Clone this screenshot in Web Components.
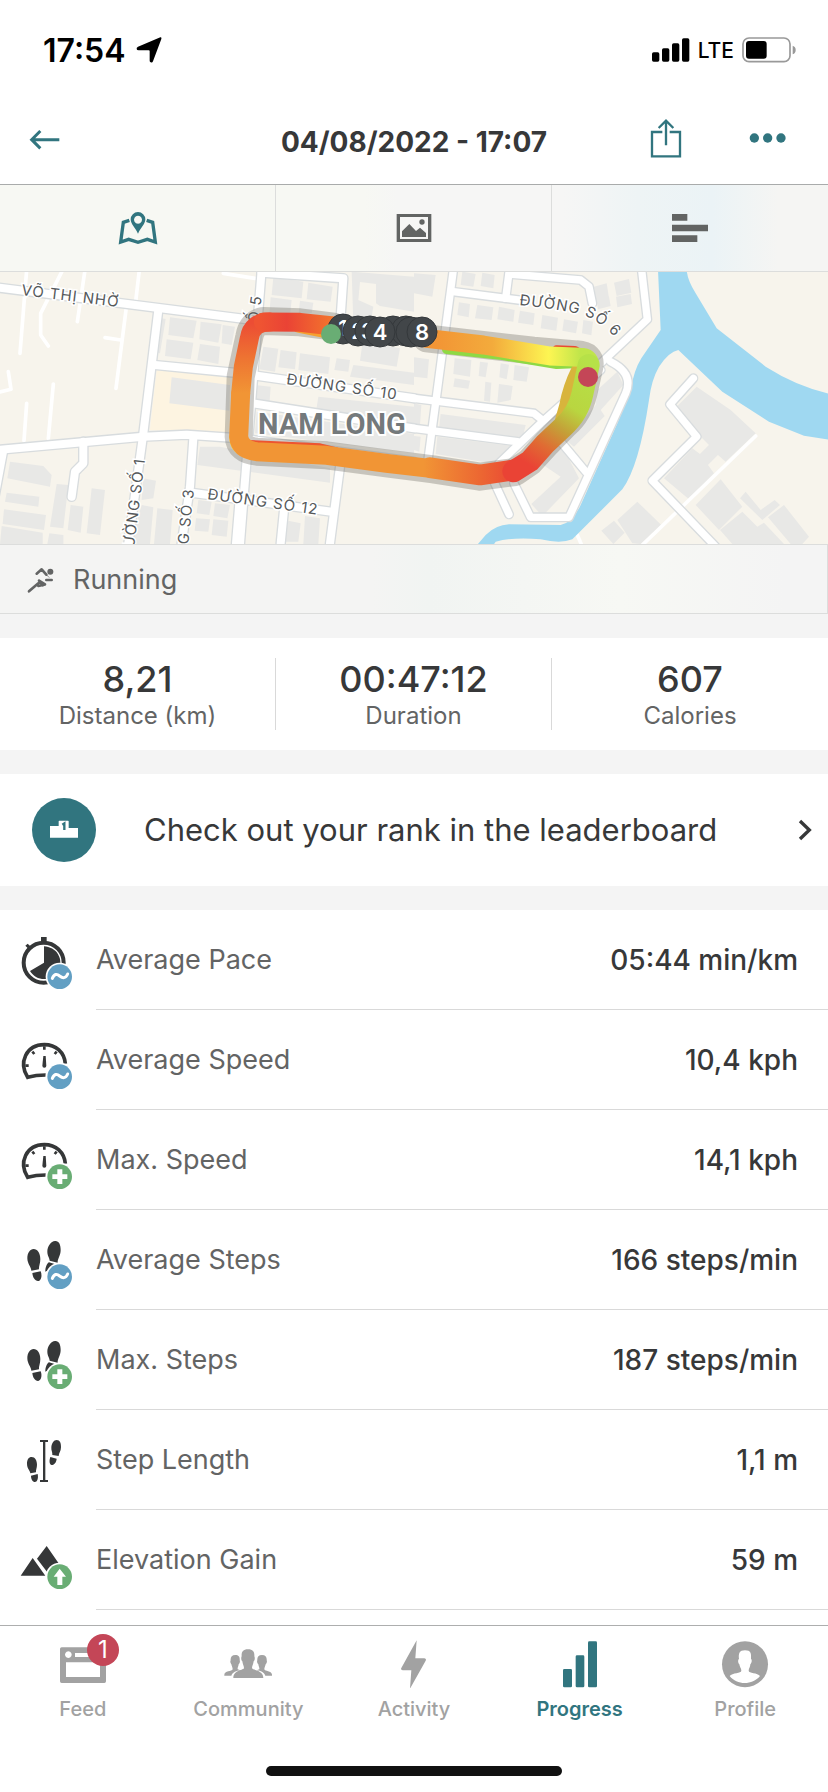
<!DOCTYPE html>
<html lang="en">
<head>
<meta charset="utf-8">
<meta name="viewport" content="width=device-width, initial-scale=1">
<title>Workout 04/08/2022</title>
<style>
  :root{
    --teal: #31757f;
    --ink: #373839;
    --muted: #636464;
    --idle: #a2a2a2;
    --line: #d9d9d9;
    --gap: #f4f4f4;
    --blue: #629fc3;
    --green: #69ad74;
    --red: #c44657;
  }
  *{ box-sizing: border-box; }
  body{
    margin: 0;
    height: 100vh;
    display: flex;
    flex-direction: column;
    background: #fff;
    color: var(--ink);
    font-family: Inter, "Liberation Sans", sans-serif;
  }
  main{ flex: 1; min-height: 0; display: flex; flex-direction: column; overflow: hidden; background: var(--gap); }
  main > *{ flex: none; }
  main > .metrics{ flex: 1 0 auto; background: #fff; margin-top: 24px; }
</style>
</head>
<body>
  <status-bar>17:54</status-bar>
  <workout-header>04/08/2022 - 17:07</workout-header>
  <main>
    <view-tabs></view-tabs>
    <route-map></route-map>
    <activity-type>Running</activity-type>
    <stat-group>
      <stat-item label="Distance (km)">8,21</stat-item>
      <stat-item label="Duration">00:47:12</stat-item>
      <stat-item label="Calories">607</stat-item>
    </stat-group>
    <rank-link>Check out your rank in the leaderboard</rank-link>
    <div class="metrics">
      <metric-row icon="pace" badge="average" label="Average Pace">05:44 min/km</metric-row>
      <metric-row icon="gauge" badge="average" label="Average Speed">10,4 kph</metric-row>
      <metric-row icon="gauge" badge="max" label="Max. Speed">14,1 kph</metric-row>
      <metric-row icon="steps" badge="average" label="Average Steps">166 steps/min</metric-row>
      <metric-row icon="steps" badge="max" label="Max. Steps">187 steps/min</metric-row>
      <metric-row icon="length" label="Step Length">1,1 m</metric-row>
      <metric-row icon="hills" badge="gain" label="Elevation Gain">59 m</metric-row>
    </div>
  </main>
  <tab-bar>
    <tab-item icon="feed" count="1">Feed</tab-item>
    <tab-item icon="community">Community</tab-item>
    <tab-item icon="activity">Activity</tab-item>
    <tab-item icon="progress" active>Progress</tab-item>
    <tab-item icon="profile">Profile</tab-item>
  </tab-bar>

<script>
const RESET = `
  *{ box-sizing: border-box; }
  svg{ display: block; flex: none; }
  button{ border: 0; padding: 0; margin: 0; background: none; color: inherit; font: inherit; }
  a{ color: inherit; text-decoration: none; }
`;

function define(name, render){
  customElements.define(name, class extends HTMLElement{
    constructor(){
      super();
      this.attachShadow({mode:"open"});
    }
    connectedCallback(){
      this.shadowRoot.innerHTML = `<style>${RESET}</style>` + render(this);
    }
  });
}

/* ---------- top of the screen ---------- */
define("status-bar", () => `
  <style>
    :host{ display: flex; align-items: center; justify-content: space-between; height: 95px; padding: 5px 32px 0 43px; color: #000; }
    div{ display: flex; align-items: center; }
    .time{ gap: 10px; font-size: 32px; font-weight: 600; }
    .net{ gap: 8px; font-size: 21px; font-weight: 500; }
  </style>
  <div class="time"><slot></slot>
    <svg width="26" height="26" viewBox="0 0 78 78"><path d="M73 1Q78 0 76 6L51 73Q49 78 44 76Q41 75 41 71V42Q41 40 38 40H8Q2 40 2 36Q1 32 6 29Z"/></svg>
  </div>
  <div class="net">
    <svg width="38" height="24" viewBox="0 0 114 72"><rect y="43" width="22" height="28" rx="5"/><rect x="30" y="31" width="22" height="40" rx="5"/><rect x="60" y="16" width="22" height="55" rx="5"/><rect x="90" y="1" width="22" height="70" rx="5"/></svg>
    LTE
    <svg width="54" height="26" viewBox="0 0 162 78"><rect x="3" y="3" width="141" height="71" rx="18" fill="none" stroke="#999" stroke-width="5"/><rect x="12" y="12" width="62" height="53" rx="9"/><path d="M152 26q9 3 9 13t-9 13z" fill="#999"/></svg>
  </div>`);

define("workout-header", () => `
  <style>
    :host{ display: grid; grid-template-columns: 1fr auto 1fr; align-items: center; height: 90px; padding: 0 29px; border-bottom: 1px solid #a9abab; color: var(--teal); }
    button{ justify-self: start; }
    h1{ margin: 0; padding-top: 4px; font-size: 28px; line-height: 36px; font-weight: 700; color: var(--ink); }
    .actions{ display: flex; align-items: center; justify-content: flex-end; gap: 67px; padding: 0 12px 4px 0; }
  </style>
  <button type="button" aria-label="Back">
    <svg width="32" height="24" viewBox="0 0 96 72" fill="none" stroke="currentColor" stroke-width="9"><path d="M6 35H91M34 9L8 35L34 61"/></svg>
  </button>
  <h1><slot></slot></h1>
  <div class="actions">
    <button type="button" aria-label="Share">
      <svg width="32" height="40" viewBox="0 0 96 120" fill="none" stroke="currentColor" stroke-width="7"><path d="M37 42H6V115H90V42H59M48 82V9M26 30L48 8L70 30"/></svg>
    </button>
    <button type="button" aria-label="More">
      <svg width="38" height="12" viewBox="0 0 114 36" fill="currentColor"><circle cx="16" cy="18" r="14"/><circle cx="56" cy="18" r="14"/><circle cx="96" cy="18" r="14"/></svg>
    </button>
  </div>`);

define("view-tabs", () => `
  <style>
    :host{ display: grid; grid-template-columns: repeat(3, 1fr); height: 87px; border-bottom: 1px solid #dcdddc; color: #626463;
      background: linear-gradient(90deg, #f7f8f3 0 44%, #f6f6f5 48% 68%, #eef4f5 77%, #ebf3f6 86%, #f5f5f3 94%); }
    button{ display: flex; align-items: center; justify-content: center; border-right: 1px solid #dcdddc; }
    button:last-child{ border: 0; }
    .on{ color: var(--teal); }
  </style>
  <button type="button" class="on" aria-label="Map">
    <svg width="40" height="34" viewBox="354 630 120 102" fill="currentColor"><path fill-rule="evenodd" d="M414 633a22 22 0 0 1 22 22c0 14-13 24-22 43c-9-19-22-29-22-43a22 22 0 0 1 22-22m0 11a12 12 0 1 0 .1 0z"/><path d="M388 658L370 664L362 723L386 715L414 724L442 715L466 723L458 664L440 658" fill="none" stroke="currentColor" stroke-width="10"/></svg>
  </button>
  <button type="button" aria-label="Photos">
    <svg width="36" height="30" viewBox="0 0 108 90" fill="currentColor"><path fill-rule="evenodd" d="M2 3H106V87H2ZM12 12V78H96V12Z"/><path d="M18 72V55L40 33L60 54L72 44L90 60V72Z"/><circle cx="78" cy="27" r="8"/></svg>
  </button>
  <button type="button" aria-label="Splits">
    <svg width="36" height="28" viewBox="0 0 108 84" fill="currentColor"><path d="M0 0H46V20H0ZM0 32H108V52H0ZM0 64H76V84H0Z"/></svg>
  </button>`);

/* ---------- map ---------- */
// tile geometry is in thirds of a pixel, east holds the half right of x = 1242
const road = (d, w = 24) => `<path d="${d}" stroke="#d8dcde" stroke-width="${w + 8}"/>`;
const west = ["M-10 52L775 152", "M785 0L720 820V820", "M475 120L430 490L385 820", "M465 285L720 310L1242 385", "M-10 540L430 500L560 494L720 505L1242 575", "M10 540L-20 700", "M250 515V580L225 605L215 680", "M580 505L570 650L545 820", "M575 668L1000 726", "M1020 590L990 820", "M718 700L708 820", "M852 720L842 820", "M785 8L1030 25L1020 170", "M760 400L1242 475"];
const east = ["M118 0L42 570", "M118 65L330 92", "M286 0L275 85", "M286 12L500 30L525 50L535 100", "M683 0L700 148L560 280", "M0 385L360 430L385 450", "M0 475L310 515", "M590 275Q660 310 635 370L465 742H350L300 640", "M560 300L380 460L255 580", "M240 635L285 733", "M440 515L515 605", "M838 325L768 403L848 500L715 632L905 830"];

const buildings = `
  <path d="M820 22L910 35L905 85L815 75ZM925 38L998 50L992 95L920 88ZM812 82L875 90L870 135H808ZM900 92L940 98L935 130H896ZM1055 5L1242 20V125L1140 108L1128 100V42L1080 36L1075 90L1120 110L1110 170L1060 160Z"/>
  <path d="M510 142L590 152L580 205L505 195ZM602 155L665 163L655 218L598 208ZM500 208L580 218L572 268L495 258ZM600 222L660 230L655 282L592 270ZM668 165L705 170L695 225L665 220ZM485 145L497 147L480 250L472 248Z"/>
  <path d="M515 322L690 345L688 422L508 400ZM600 530L660 530L990 595V638L592 585ZM30 575L130 588L155 615L150 650L22 625ZM20 668L118 680L115 710L15 695ZM12 718L138 735L132 780L8 762ZM5 768L128 788V822H0ZM170 642L205 645L190 775L150 770ZM212 705L250 710L242 788L203 780ZM275 655L315 660L300 795L260 790ZM148 790L190 795V822H142ZM430 625L468 632L460 685L425 690ZM425 705L460 712L450 822H390ZM472 715L518 720L510 822H462Z"/>
  <path d="M595 690L635 695L628 735L590 730ZM645 700L690 705L682 745L640 738ZM588 745L630 748L625 785L584 782ZM640 748L685 752L680 800L635 795ZM865 752L902 760L895 815H852ZM915 738L960 745L955 822H910Z"/>
  <path d="M790 230L835 236L825 305L778 298ZM842 240L890 247L885 298L835 292ZM900 250L990 262L985 312L895 300ZM1010 265L1050 270L1045 305L1003 300ZM1088 215L1200 235L1190 290L1080 272ZM1060 285L1242 308V345L1050 320ZM765 345L812 350L808 405L760 400ZM955 380L1242 410V460L948 425ZM770 425L1242 492V550L765 490Z"/>`;
const buildingsEast = `
  <path d="M0 10L65 15L55 80L0 70ZM145 5L185 12L178 50L140 45ZM205 8L242 15L238 55L200 48ZM135 97L168 102L164 142L130 135ZM190 105L238 112L233 150L183 145ZM255 110L302 120L298 155L250 148ZM318 122L362 130L358 165L312 158ZM385 135L432 143L427 182L380 175ZM450 148L492 155L486 190L445 182ZM508 150L537 155L532 196L504 190ZM540 50L578 40L585 85L548 100ZM600 38L645 27L652 68L608 78ZM606 80L650 72L654 102L610 112ZM548 90L585 80L590 108L552 118Z"/>
  <path d="M0 262L45 268L40 325L0 320ZM122 265L172 270L168 320L118 312ZM198 275L222 278L215 322L194 318ZM260 280L285 284L278 328L256 322ZM302 285L345 292L338 335L298 330ZM122 325L168 332L163 356L118 350ZM214 335L232 338L228 395L210 392ZM255 342L296 348L290 390L250 398ZM80 432L335 465L325 508L75 475ZM70 500L310 530L270 555L245 582L65 552ZM0 400L22 405L18 465L0 460ZM0 498L20 500L16 545L0 540Z"/>
  <path d="M610 305L628 345L560 420L572 438L480 530L455 510L545 405L550 360ZM385 560L440 520L495 625L385 738L352 702L440 620L380 580Z"/>
  <path d="M848 350L950 420L1025 490L935 575L912 555L882 585L900 610L825 688L750 625L835 535L858 552L885 525L850 490L790 408ZM920 628L985 710L915 780L845 705ZM985 725L1030 770L1050 758L1110 822H955L918 780ZM1110 705L1185 800L1165 822H1130L1062 742ZM995 665L1040 720L1082 690L1098 705L1045 750L978 685ZM670 695L742 765L680 822L655 820L610 750ZM600 752L632 788L598 822L562 782Z"/>`;

define("route-map", () => `
  <style>
    :host{ display: block; height: 272px; overflow: hidden; background: #f7f4ec; }
    svg{ width: 100%; height: 100%; }
    text{ font-family: Inter, "Noto Sans", sans-serif; }
    .street{ font-size: 15px; letter-spacing: 1px; fill: #55595b; stroke: #fff; stroke-width: 3px; paint-order: stroke; }
    .area{ font-family: Roboto, sans-serif; font-size: 29px; font-weight: 700; fill: #74797b; stroke: #fff; stroke-width: 4px; paint-order: stroke; }
    .km{ font-size: 22px; font-weight: 600; fill: #fff; text-anchor: middle; }
  </style>
  <svg viewBox="0 0 828 272" preserveAspectRatio="xMidYMid slice" role="img" aria-label="Route map">
    <defs>
      <linearGradient id="north" gradientUnits="userSpaceOnUse" x1="1310" y1="0" x2="1790" y2="0"><stop offset="0" stop-color="#f29535"/><stop offset=".35" stop-color="#f3ab3c"/><stop offset=".7" stop-color="#fdf552"/><stop offset=".9" stop-color="#bfe54a"/></linearGradient>
      <linearGradient id="bend" gradientUnits="userSpaceOnUse" x1="1775" y1="280" x2="1580" y2="580"><stop offset="0" stop-color="#b6e148"/><stop offset=".4" stop-color="#b9d640"/><stop offset=".6" stop-color="#c4a138"/><stop offset=".8" stop-color="#e06b33"/><stop offset="1" stop-color="#ea4335"/></linearGradient>
      <linearGradient id="south" gradientUnits="userSpaceOnUse" x1="1560" y1="0" x2="1270" y2="0"><stop offset="0" stop-color="#ea4335"/><stop offset=".4" stop-color="#ec6632"/><stop offset="1" stop-color="#f19535"/></linearGradient>
      <linearGradient id="side" gradientUnits="userSpaceOnUse" x1="0" y1="370" x2="0" y2="160"><stop offset="0" stop-color="#f19535"/><stop offset=".5" stop-color="#ee7432"/><stop offset="1" stop-color="#ec4d34"/></linearGradient>
      <linearGradient id="start" gradientUnits="userSpaceOnUse" x1="780" y1="0" x2="1010" y2="0"><stop offset="0" stop-color="#ef5432"/><stop offset=".35" stop-color="#ea4335"/><stop offset="1" stop-color="#f47a2c"/></linearGradient>
      <path id="curve" d="M519 33Q560 37 582 43Q604 49 626 79"/>
    </defs>
    <g transform="scale(.333333) translate(0 -6)" stroke-linejoin="round" stroke-linecap="round">
      <path d="M470 300L690 322V490L450 480Z" fill="#fdf4e1"/>
      <g fill="#e8e8e6">${buildings}<g transform="translate(1242 0)">${buildingsEast}</g></g>
      <g fill="none" stroke="#fff" stroke-width="11">
        <path d="M80 0L60 250M188 0L122 130V195L145 228M255 0L232 155M418 0L407 95M378 120L348 355M315 203L362 210M25 305L33 358L0 366M80 400L72 512M160 342L145 505M670 10L765 25"/>
        <path transform="translate(1242 0)" d="M1025 498L680 830M490 795L505 830"/>
      </g>
      <g transform="translate(1242 0)" fill="#9fd8f1">
        <path d="M732 0H818Q820 30 845 70L908 175L1055 290Q1150 350 1250 372V510L1170 497L1065 455L925 365L793 240Q765 245 735 290Q712 330 705 390Q675 590 625 658L475 808Q440 822 380 808Q300 800 245 815L235 830H185L215 795Q245 765 285 763L440 765Q475 758 500 705L610 460L650 360Q660 300 682 265L740 180Z"/>
      </g>
      <g fill="none">
        ${west.map(d => road(d)).join("")}
        <g transform="translate(1242 0)">${east.map(d => road(d, 22)).join("")}</g>
        <g stroke="#fff" stroke-width="24">${west.map(d => `<path d="${d}"/>`).join("")}
          <g transform="translate(1242 0)" stroke-width="22">${east.map(d => `<path d="${d}"/>`).join("")}</g></g>
      </g>
    </g>
    <g class="street">
      <text transform="translate(262 24) rotate(-82)" text-anchor="end">ĐƯỜNG SỐ 5</text>
      <text transform="translate(21 23) rotate(7)">VÕ THỊ NHỜ</text>
      <text transform="translate(286 112) rotate(8)">ĐƯỜNG SỐ 10</text>
      <text transform="translate(207 227) rotate(8)">ĐƯỜNG SỐ 12</text>
      <text transform="translate(145 187) rotate(-83)" text-anchor="end">ĐƯỜNG SỐ 1</text>
      <text transform="translate(194 217) rotate(-84)" text-anchor="end">ĐƯỜNG SỐ 3</text>
      <text><textPath href="#curve">ĐƯỜNG SỐ 6</textPath></text>
    </g>
    <text class="area" x="258" y="162">NAM LONG</text>
    <g transform="scale(.333333) translate(0 -6)" fill="none" stroke-linejoin="round" stroke-linecap="round">
      <path d="M1000 170L900 157L790 153Q755 160 748 200L722 320L716 500Q718 540 770 545L980 556L1160 580L1300 598L1440 620L1545 606L1590 575L1640 520L1697 462Q1735 430 1750 370L1768 290Q1775 255 1730 253L1600 242L1280 205" stroke="#5a554b" stroke-opacity=".3" stroke-width="84"/>
      <path d="M1670 238L1725 240L1755 258" stroke="#e94b32" stroke-width="24"/>
      <path d="M1340 238L1500 255L1670 283L1740 280" stroke="#8fd944" stroke-width="28"/>
      <path d="M1730 300Q1705 350 1695 405L1682 450" stroke="#d8b43c" stroke-width="34"/>
      <path d="M703 500Q702 545 765 556L850 562" stroke="#fddc42" stroke-width="30"/>
      <path d="M748 520L960 530L1010 542" stroke="#ed5430" stroke-width="20"/>
      <path d="M1000 182L900 162" stroke="#f6a02f" stroke-width="54"/>
      <g stroke-width="57">
        <path d="M722 370L716 500Q720 538 770 545L980 556L1160 580L1290 595" stroke="#f19535"/>
        <path d="M1290 593L1440 615L1540 600" stroke="url(#south)" stroke-width="62"/>
        <path d="M1280 205L1450 225L1650 258L1740 262Q1770 262 1768 285" stroke="url(#north)"/>
        <path d="M1766 285L1747 372Q1735 430 1690 470L1635 522L1590 573L1540 604" stroke="url(#bend)" stroke-width="66"/>
        <path d="M810 156Q755 156 748 205L730 290L722 370" stroke="url(#side)"/>
        <path d="M790 156L900 157L1000 168" stroke="url(#start)"/>
      </g>
    </g>
    <g fill="#424649" stroke="#34383b">
      <circle cx="343" cy="57" r="15"/><text class="km" stroke="none" x="343" y="64">1</text>
      <circle cx="358" cy="59" r="15"/><text class="km" stroke="none" x="358" y="67">2</text>
      <circle cx="370" cy="59" r="15"/><text class="km" stroke="none" x="368" y="67">3</text>
      <circle cx="393" cy="59" r="15"/><circle cx="406" cy="59" r="15"/><circle cx="411" cy="60" r="15"/>
      <circle cx="380" cy="60" r="15"/><text class="km" stroke="none" x="380" y="68">4</text>
      <circle cx="422" cy="60" r="15"/><text class="km" stroke="none" x="422" y="68">8</text>
    </g>
    <circle cx="331" cy="62" r="10" fill="#69ad74"/>
    <circle cx="588" cy="105" r="10" fill="#c44657"/>
  </svg>`);

define("activity-type", () => `
  <style>
    :host{ display: flex; align-items: center; gap: 18px; height: 70px; padding: 2px 27px 0; font-size: 27px; line-height: 36px; color: var(--muted);
      border: solid #dcdddc; border-width: 1px 1px 1px 0; background: linear-gradient(90deg, #f4f4f3 45%, #f1f4f2 52%, #f7f8f4 75%, #f4f4f4 95%); }
  </style>
  <svg width="28" height="28" viewBox="0 0 84 84" fill="none" stroke="currentColor" stroke-width="8" stroke-linecap="round" stroke-linejoin="round"><path d="M6 76L34 52M29 23L44 10L58 26M36 44L54 55L34 60M36 44L48 58M58 42H74"/><path d="M58 26L66 34" stroke-width="2"/><circle cx="70" cy="17" r="9" fill="currentColor" stroke="none"/></svg>
  <slot></slot>`);

/* ---------- summary ---------- */
define("stat-group", () => `
  <style>
    :host{ display: grid; grid-template-columns: repeat(3, 1fr); margin-top: 24px; padding: 20px 0; background: #fff; }
    ::slotted(:not(:last-child)){ border-right: 1px solid var(--line); }
  </style>
  <slot></slot>`);

define("stat-item", el => `
  <style>
    :host{ display: flex; flex-direction: column; align-items: center; height: 72px; }
    strong{ font-size: 36px; line-height: 42px; font-weight: 500; }
    span{ font-size: 24px; line-height: 32px; color: var(--muted); }
  </style>
  <strong><slot></slot></strong><span>${el.getAttribute("label")}</span>`);

define("rank-link", () => `
  <style>
    :host{ display: block; margin-top: 24px; background: #fff; }
    a{ display: flex; align-items: center; height: 112px; padding: 0 16px 0 32px; font-size: 31px; line-height: 40px; }
    .disc{ display: grid; place-items: center; width: 64px; height: 64px; margin-right: 48px; border-radius: 50%; background: var(--teal); }
    .chevron{ margin-left: auto; }
  </style>
  <a href="#leaderboard">
    <span class="disc"><svg width="28" height="24" viewBox="0 0 84 72"><path d="M0 59V24H26V10Q26 8 28 8H54Q56 8 56 10V30H84V59Z" fill="#fff"/><path d="M37 20L43 16V36" fill="none" stroke="#31757f" stroke-width="7"/></svg></span>
    <slot></slot>
    <svg class="chevron" width="14" height="22" viewBox="0 0 42 66" fill="none" stroke="currentColor" stroke-width="10"><path d="M6 6L34 33L6 60"/></svg>
  </a>`);

/* ---------- metric list ---------- */
const METRIC_ICONS = {
  pace: `<circle cx="131" cy="155" r="60" fill="none" stroke="currentColor" stroke-width="12"/><path d="M132 155V106A49 49 0 1 1 90 180Z"/><path d="M123 78H140V94H123ZM76 104L83 98L96 110L89 117Z"/>`,
  gauge: `<path d="M137 192Q108 192 83 199C55 155 78 101 133 101C168 101 193 124 196 158" fill="none" stroke="currentColor" stroke-width="11"/><path d="M133 106V116M97 122L103 129M170 122L164 129M76 164H86" fill="none" stroke="currentColor" stroke-width="8"/><path d="M130 135H137L139 164A6 6 0 1 1 127 164Z"/>`,
  steps: `<path d="M101 114C112 114 121 126 121 144C121 158 116 166 117 175L94 179C93 167 82 158 82 142C82 126 90 114 101 114ZM97 186L122 181C128 196 122 210 114 210C105 210 98 199 97 186ZM165 90C177 89 182 101 182 117C182 134 172 144 173 155L149 149C149 140 142 135 142 122C142 106 153 91 165 90ZM147 154L164 159L150 175L136 182C136 170 140 158 147 154Z"/>`,
  length: `<path d="M95 138C105 138 111 148 111 161C111 171 107 178 108 184L91 187C90 177 81 173 81 158C81 146 86 138 95 138ZM93 194L113 189C116 203 111 213 105 213C98 213 93 204 93 194ZM170 87C180 87 183 96 183 109C183 121 176 127 176 135L157 132C158 124 153 119 154 109C155 97 161 87 170 87ZM151 138L170 143C169 156 161 162 155 162C148 161 147 149 151 138ZM120 87H144V93H136V207H144V213H120V207H129V93H120Z"/>`,
  hills: `<path d="M62 194L98 141L136 194ZM140 105L178 160L142 184L111 143Z"/>`
};
const BADGES = {
  average: `<circle cx="179" cy="197" r="37" fill="var(--blue)"/><path d="M157 202C163 188 171 188 179 195C188 202 197 203 203 189" fill="none" stroke="#fff" stroke-width="9" stroke-linecap="round"/>`,
  max: `<circle cx="179" cy="197" r="37" fill="var(--green)"/><path d="M172 175H187V190H202V204H187V219H172V204H157V190H172Z" fill="#fff"/>`,
  gain: `<circle cx="179" cy="197" r="37" fill="var(--green)"/><path d="M179 173L198 197H187V222H172V197H161Z" fill="#fff"/>`
};

define("metric-row", el => {
  const badge = BADGES[el.getAttribute("badge")];
  return `
  <style>
    :host{ display: flex; align-items: center; height: 100px; padding-left: 20px; font-size: 28px; line-height: 36px; }
    svg{ margin-right: 20px; color: #353738; overflow: visible; }
    div{ flex: 1; display: flex; align-items: center; justify-content: space-between; height: 100%; padding-right: 30px; border-bottom: 1px solid var(--line); }
    span{ font-size: 27px; color: var(--muted); }
    strong{ font-weight: 500; }
  </style>
  <svg width="56" height="56" viewBox="60 63 168 168" fill="currentColor">${METRIC_ICONS[el.getAttribute("icon")]}${badge ? `<circle cx="179" cy="197" r="42" fill="#fff"/>${badge}` : ""}</svg>
  <div><span>${el.getAttribute("label")}</span><strong><slot></slot></strong></div>`;
});

/* ---------- bottom navigation ---------- */
const TAB_ICONS = {
  feed: `<svg viewBox="174 89 144 144"><path fill-rule="evenodd" d="M182 111H310Q315 111 315 116V213Q315 218 310 218H182Q177 218 177 213V116Q177 111 182 111ZM195 156V200H297V156ZM202 123a10 10 0 1 0 .1 0ZM222 128V140H300V128Z"/></svg>`,
  community: `<svg viewBox="671 89 144 144"><path d="M743 117C759 117 763 126 762 138C764 140 764 150 760 153C759 162 755 168 755 173C755 180 789 178 789 203H699C699 178 731 180 731 173C731 168 727 162 726 153C722 150 722 140 724 138C723 126 727 117 743 117Z"/><path d="M705 134C716 134 719 141 718 150C720 154 718 159 715 162C714 170 711 172 712 177L720 180C707 182 698 185 693 196H672C670 181 695 184 697 177C697 171 694 168 693 162C690 159 689 154 691 150C690 141 694 134 705 134ZM785 134C774 134 770 141 771 150C769 154 771 159 774 162C775 170 778 172 777 177L769 180C782 182 790 185 795 196H815C817 181 794 184 792 177C792 171 795 168 796 162C799 159 801 154 799 150C800 141 796 134 785 134Z"/></svg>`,
  activity: `<svg viewBox="1169 89 144 144"><path d="M1249 90L1203 173Q1200 179 1207 180H1233L1229 235L1276 151Q1279 145 1272 144H1245Z"/></svg>`,
  progress: `<svg viewBox="423 89 144 144"><rect x="444" y="176" width="27" height="55" rx="4"/><rect x="482" y="135" width="26" height="96" rx="4"/><rect x="519" y="93" width="27" height="138" rx="4"/></svg>`,
  profile: `<svg viewBox="918 89 144 144"><circle cx="990" cy="162" r="69"/><path d="M990 120C1008 120 1009 130 1008 146C1012 148 1010 158 1006 162C1006 170 1001 175 1001 181C1001 190 1028 186 1035 197C1012 225 966 225 944 197C952 186 979 190 979 181C979 175 974 170 973 162C969 158 968 148 972 146C970 130 973 120 990 120Z" fill="#fff"/></svg>`
};

define("tab-bar", () => `
  <style>
    :host{ display: block; height: 167px; border-top: 1px solid #adaeae; background: #fff; }
    nav{ display: grid; grid-template-columns: repeat(5, 1fr); height: 140px; padding-top: 14px; }
    .home{ width: 296px; height: 10px; margin: 0 auto; border-radius: 5px; background: #111; }
  </style>
  <nav><slot></slot></nav>
  <div class="home"></div>`);

define("tab-item", el => {
  const count = el.getAttribute("count");
  return `
  <style>
    :host{ color: var(--idle); font-size: 20px; line-height: 26px; font-weight: 500; }
    :host([active]){ color: var(--teal); font-weight: 600; }
    a{ display: flex; flex-direction: column; align-items: center; gap: 8px; }
    .icon{ position: relative; width: 48px; height: 48px; }
    svg{ width: 48px; height: 48px; fill: currentColor; }
    .count{ position: absolute; top: -6px; right: -12px; width: 32px; height: 32px; border-radius: 50%; background: var(--red); color: #fff; font-size: 24px; line-height: 32px; font-weight: 400; text-align: center; }
  </style>
  <a href="#${el.getAttribute("icon")}">
    <span class="icon">${TAB_ICONS[el.getAttribute("icon")]}${count ? `<span class="count">${count}</span>` : ""}</span>
    <span><slot></slot></span>
  </a>`;
});
</script>
</body>
</html>
